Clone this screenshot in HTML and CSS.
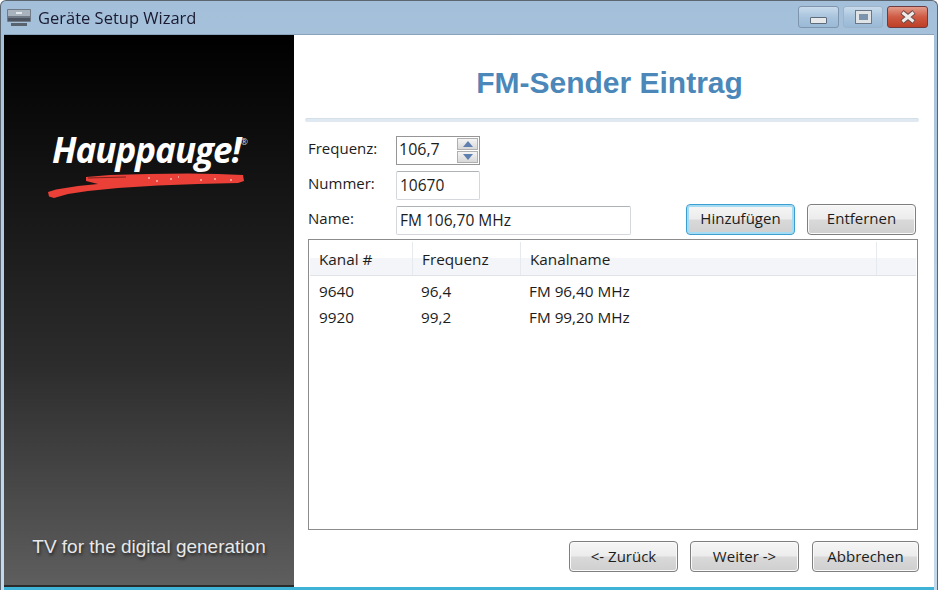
FILE: index.html
```html
<!DOCTYPE html>
<html lang="de">
<head>
<meta charset="utf-8">
<title>Geräte Setup Wizard</title>
<link rel="stylesheet" href="styles.css">
</head>
<body>
<div class="window">
  <header class="titlebar">
    <svg class="appicon" width="24" height="18" viewBox="0 0 24 18"><rect x="0" y="0" width="24" height="13" rx="1" fill="#6f7a86"/><rect x="1" y="1" width="22" height="6" fill="#a9b3bd"/><rect x="9" y="3" width="6" height="2" fill="#e4e8ec"/><rect x="1" y="9" width="22" height="3" fill="#4d5660"/><rect x="4" y="14" width="16" height="3" fill="#59636e"/></svg>
    <span class="wintitle">Geräte Setup Wizard</span>
    <div class="controls">
      <span class="ctl ctl-min"><i class="glyph-min"></i></span>
      <span class="ctl ctl-max"><i class="glyph-max"></i></span>
      <span class="ctl ctl-close"><svg width="22" height="14" viewBox="0 0 22 14"><path d="M5 2 L17 12 M17 2 L5 12" stroke="#6b4a48" stroke-width="5"/><path d="M5.500 2.500 L16.500 11.500 M16.500 2.500 L5.500 11.500" stroke="#efeceb" stroke-width="3"/></svg></span>
    </div>
  </header>
  <div class="client">
    <aside class="sidebar">
      <div class="logo">
        <span class="brand">Hauppauge!<sup class="reg">®</sup></span>
        <svg class="swoosh" width="198" height="26" viewBox="0 0 198 26"><path d="M38 4 L62 2 L100 1 L140 .500 L170 1 L195 2 L196 8 L190 10 L150 11 L110 12.500 L70 15 L40 18 L20 21 L6 25 L1 23.500 L0 19 L8 16.500 L30 13 L50 11 L38 8 Z" fill="#ea4038"/><path d="M40 5 L78 4" stroke="#7a201c" stroke-width="1"/><path d="M100 5 h2 M108 8 h2 M122 6 h2 M130 4 h1 M152 7 h2 M166 6 h2 M182 7 h2" stroke="#f6b6ae" stroke-width="1.500"/></svg>
      </div>
      <div class="slogan">TV for the digital generation</div>
    </aside>
    <main class="content">
      <h1 class="heading">FM-Sender Eintrag</h1>
      <div class="rule"></div>
      <form class="form">
        <label class="lbl">Frequenz:</label>
        <div class="spin">
          <span class="val">106,7</span>
          <span class="spinbtns">
            <span class="spinbtn"><svg width="10" height="6" viewBox="0 0 10 6"><path d="M5 0 L10 6 H0 Z" fill="#5e7fb0"/></svg></span>
            <span class="spinbtn"><svg width="10" height="6" viewBox="0 0 10 6"><path d="M0 0 H10 L5 6 Z" fill="#5e7fb0"/></svg></span>
          </span>
        </div>
        <label class="lbl">Nummer:</label>
        <div class="field narrow">10670</div>
        <label class="lbl">Name:</label>
        <div class="namerow">
          <div class="field wide">FM 106,70 MHz</div>
          <div class="addbtns">
            <button type="button" class="btn focus">Hinzufügen</button>
            <button type="button" class="btn">Entfernen</button>
          </div>
        </div>
      </form>
      <section class="list">
        <div class="row head">
          <span class="c1">Kanal #</span><span class="c2">Frequenz</span><span class="c3">Kanalname</span><span class="c4"></span>
        </div>
        <div class="rows">
          <div class="row"><span class="c1">9640</span><span class="c2">96,4</span><span class="c3">FM 96,40 MHz</span></div>
          <div class="row"><span class="c1">9920</span><span class="c2">99,2</span><span class="c3">FM 99,20 MHz</span></div>
        </div>
      </section>
      <footer class="footer">
        <button type="button" class="btn">&lt;- Zurück</button>
        <button type="button" class="btn next">Weiter -&gt;</button>
        <button type="button" class="btn cancel">Abbrechen</button>
      </footer>
    </main>
  </div>
</div>
</body>
</html>
```
FILE: styles.css
```css
* { box-sizing: border-box; }
html, body { margin: 0; padding: 0; }
body { width: 938px; height: 590px; overflow: hidden; background: #fff; font-family: "Open Sans", "Noto Sans", sans-serif; font-size: 15px; color: #1c1c1c; }
.window { width: 938px; height: 590px; display: flex; flex-direction: column; background: linear-gradient(#a3bfd9, #bcd3e8 60%, #c4d9ec); border: 1px solid #5c6670; border-bottom: 0; border-radius: 6px 6px 0 0; filter: blur(.4px); }
.titlebar { height: 33px; display: flex; align-items: center; padding: 0 6px; flex: none; }
.appicon { margin-right: 7px; }
.wintitle { font-size: 16.500px; color: #1a1a30; }
.controls { margin-left: auto; display: flex; gap: 4px; margin-top: -1px; margin-right: 3px; }
.ctl { height: 22px; display: flex; align-items: center; justify-content: center; border: 1px solid #7f95ad; border-radius: 3px; background: linear-gradient(#c9dbeb, #a9c4dd 50%, #9ab9d5); }
.ctl-min { width: 41px; }
.ctl-max { width: 40px; border-color: #9cb3c9; }
.ctl-close { width: 41px; border-color: #6d3b40; background: linear-gradient(#e39c8c, #cf5a43 50%, #bd3f26); }
.glyph-min { width: 17px; height: 7px; margin-top: 6px; background: #e6e8ea; border: 1px solid #5d6b7a; border-radius: 1px; }
.glyph-max { width: 15px; height: 12px; border: 3px solid #dfe3e6; outline: 1px solid #6a7786; background: #7b93ad; }
.client { flex: 1; display: flex; margin: 0 3px; background: #fff; border-bottom: 3px solid #3fb3d6; min-height: 0; border-top: 1px solid #8ba3ba; }
.sidebar { width: 290px; flex: none; display: flex; flex-direction: column; align-items: center; background: linear-gradient(#000, #161616 30%, #2c2c2c 60%, #5e5e5e); color: #fff; border-bottom: 2px solid #2a2a2a; }
.logo { margin-top: 95px; width: 200px; display: flex; flex-direction: column; position: relative; height: 70px; }
.brand { font: italic 700 35px "Open Sans", sans-serif; letter-spacing: -1px; line-height: 40px; margin-left: 3px; white-space: nowrap; }
.reg { font-size: 9px; font-style: normal; font-weight: 400; letter-spacing: 0; vertical-align: 18px; line-height: 0; color: #ddd; }
.swoosh { position: absolute; left: -1px; top: 43px; }
.slogan { margin-top: auto; margin-bottom: 27px; font: 19px "Liberation Sans", Arial, sans-serif; color: #e8e8e8; text-shadow: 1px 2px 3px #222; }
.content { flex: 1; min-width: 0; display: flex; flex-direction: column; padding: 0 20px 12px 11px; }
.heading { margin: 26px 0 0; height: 44px; text-align: center; font: bold 30px/44px "Liberation Sans", Arial, sans-serif; color: #4b87b8; }
.rule { height: 4px; margin: 13px 0 0; background: #e0e9f1; border-top: 1px solid #d3dfe9; border-radius: 2px; width: 614px; }
.form { display: grid; grid-template-columns: 88px 1fr; row-gap: 6px; margin: 14px 0 0 3px; align-items: center; }
.lbl { font-size: 15px; margin-top: -5px; }
.spin { width: 84px; height: 29px; border: 1px solid #969696; display: flex; align-items: center; justify-content: space-between; padding: 0 1px 0 2px; font-size: 16px; }
.val { margin-top: -3px; }
.spinbtns { display: flex; flex-direction: column; width: 21px; height: 25px; gap: 1px; }
.spinbtn { flex: 1; display: flex; align-items: center; justify-content: center; background: linear-gradient(#f4f4f4, #d8d8d8); border: 1px solid #b0b0b0; }
.field { height: 29px; border: 1px solid #d4d8dd; border-top-color: #aeb3b8; border-radius: 2px; display: flex; align-items: center; padding: 0 3px 2px 3px; font-size: 15.500px; }
.narrow { width: 84px; }
.wide { width: 235px; }
.namerow { display: flex; align-items: center; justify-content: space-between; width: 521px; }
.addbtns { display: flex; gap: 12px; margin-top: -3px; margin-right: 1px; }
.btn { width: 109px; height: 31px; padding: 0 0 2px; font: 15px "Open Sans", "Noto Sans", sans-serif; color: #1c1c1c; border: 1px solid #7f7f7f; border-radius: 4px; background: linear-gradient(#f6f6f6, #ececec 48%, #d9d9d9 52%, #cfcfcf); box-shadow: inset 0 0 0 1px #fafafa; }
.focus { border-color: #3c9fd0; box-shadow: inset 0 0 0 2px #a5dcf3; }
.next { margin-right: 1px; }
.cancel { width: 107px; margin-right: 1px; }
.list { margin: 4px 0 0 3px; width: 610px; height: 291px; border: 1px solid #8c8c8c; padding: 1px; flex: none; }
.row { display: flex; height: 26px; align-items: center; font-size: 15.300px; }
.head { height: 35px; padding-top: 1px; background: linear-gradient(#fff 50%, #f3f5f8 50%); border-bottom: 1px solid #dfe3e8; }
.rows { padding-top: 2px; }
.c1, .c2, .c3 { padding-left: 9px; }
.c1 { width: 102px; }
.c2 { width: 108px; }
.c3 { width: 356px; }
.c4 { flex: 1; }
.head .c1, .head .c2, .head .c3, .head .c4 { height: 100%; display: flex; align-items: center; }
.head .c2, .head .c3, .head .c4 { border-left: 1px solid #e6e9ed; }
.footer { display: flex; gap: 12px; justify-content: flex-end; margin-top: 11px; width: 615px; }
```
